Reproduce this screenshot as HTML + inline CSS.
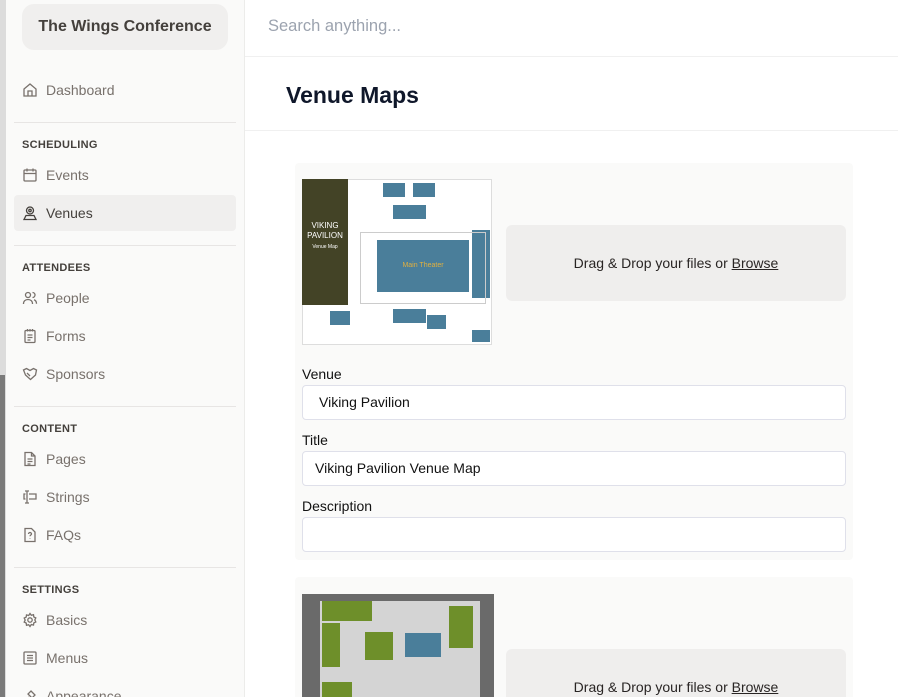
<!DOCTYPE html>
<html><head><style>
*{box-sizing:border-box;margin:0;padding:0}
html,body{width:898px;height:697px;overflow:hidden}
body{font-family:"Liberation Sans",sans-serif;background:#fff;position:relative}
.strip{position:absolute;left:0;top:0;width:6px;height:697px;background:#dcdcdc}
.strip2{position:absolute;left:0;top:375px;width:5px;height:322px;background:#7a7a7a}
.side{position:absolute;left:6px;top:0;width:239px;height:697px;background:#fafaf9;border-right:1px solid #ececea}
.brand{position:absolute;left:16px;top:4px;width:206px;height:46px;background:#f0efee;border-radius:12px;font-size:16px;font-weight:bold;color:#44403c;text-align:center;line-height:46px}
.item{position:absolute;left:8px;width:222px;height:36px;border-radius:4px;font-size:14px;color:#78716c;line-height:36px;padding-left:32px}
.item svg{position:absolute;left:8px;top:10px}
.item.act{background:#f0efee;color:#44403c}
.sec{position:absolute;left:16px;font-size:11px;font-weight:bold;color:#44403c;letter-spacing:.3px}
.hr{position:absolute;left:8px;width:222px;height:1px;background:#e7e5e4}
.search{position:absolute;left:268px;top:17px;font-size:16.5px;color:#9ca3af}
.l1{position:absolute;left:245px;top:56px;width:653px;height:1px;background:#f0f0f0}
.l2{position:absolute;left:245px;top:130px;width:653px;height:1px;background:#f0f0f0}
h1{position:absolute;left:286px;top:82px;font-size:23px;color:#0f172a}
.card{position:absolute;left:295px;width:558px;background:#fafaf9;border-radius:4px}
.drop{position:absolute;left:506px;width:340px;height:76px;background:#efeeed;border-radius:6px;font-size:14px;color:#292524;text-align:center;line-height:76px}
.drop u{text-decoration:underline}
.lbl{position:absolute;left:302px;font-size:14px;color:#111}
.inp{position:absolute;left:302px;width:544px;height:35px;background:#fff;border:1px solid #dfe0ea;border-radius:4px;font-size:14px;color:#111;line-height:33px;padding-left:12px}
.m{position:absolute}
</style></head><body>
<div class="strip"></div><div class="strip2"></div>
<div class="side">
<div class="brand">The Wings Conference</div>
</div>
<div class="item" style="top:72px;left:14px"><svg width="16" height="16" viewBox="0 0 16 16" fill="none" stroke="#78716c" stroke-width="1.3"><path d="M2 7L8 2l6 5v7H2z M6 14V9h4v5"/></svg>Dashboard</div>
<div class="hr" style="top:122px;left:14px"></div>
<div class="sec" style="top:139px;left:22px">SCHEDULING</div>
<div class="item" style="top:157px;left:14px"><svg width="16" height="16" viewBox="0 0 16 16" fill="none" stroke="#78716c" stroke-width="1.3"><rect x="2" y="3" width="12" height="11" rx="1"/><path d="M2 6.5h12M5 1.5v3M11 1.5v3"/></svg>Events</div>
<div class="item act" style="top:195px;left:14px"><svg width="16" height="16" viewBox="0 0 16 16" fill="none" stroke="#44403c" stroke-width="1.3"><circle cx="8" cy="5.5" r="3.5"/><circle cx="8" cy="5.5" r="1.2"/><path d="M2 14.5l2-4h8l2 4z"/></svg>Venues</div>
<div class="hr" style="top:245px;left:14px"></div>
<div class="sec" style="top:262px;left:22px">ATTENDEES</div>
<div class="item" style="top:280px;left:14px"><svg width="16" height="16" viewBox="0 0 16 16" fill="none" stroke="#78716c" stroke-width="1.3"><circle cx="6" cy="5" r="2.5"/><path d="M1.5 14c0-3 2-4.5 4.5-4.5s4.5 1.5 4.5 4.5M10.5 2.5a2.5 2.5 0 010 5M12 9.8c1.5.5 2.5 2 2.5 4"/></svg>People</div>
<div class="item" style="top:318px;left:14px"><svg width="16" height="16" viewBox="0 0 16 16" fill="none" stroke="#78716c" stroke-width="1.3"><rect x="3" y="2.5" width="10" height="12" rx="1"/><path d="M5.5 1v2.5M8 1v2.5M10.5 1v2.5M5.5 7h5M5.5 9.5h5M5.5 12h3"/></svg>Forms</div>
<div class="item" style="top:356px;left:14px"><svg width="16" height="16" viewBox="0 0 16 16" fill="none" stroke="#78716c" stroke-width="1.3"><path d="M1.5 4l3-1.5 3.5 2 3.5-2 3 1.5-1 5-5 4.5-5-4.5z M5 7l3 3"/></svg>Sponsors</div>
<div class="hr" style="top:406px;left:14px"></div>
<div class="sec" style="top:423px;left:22px">CONTENT</div>
<div class="item" style="top:441px;left:14px"><svg width="16" height="16" viewBox="0 0 16 16" fill="none" stroke="#78716c" stroke-width="1.3"><path d="M3 1.5h6.5L13 5v9.5H3z M9.5 1.5V5H13M5.5 8h5M5.5 10.5h5M5.5 13h3"/></svg>Pages</div>
<div class="item" style="top:479px;left:14px"><svg width="16" height="16" viewBox="0 0 16 16" fill="none" stroke="#78716c" stroke-width="1.3"><path d="M5 2v12M3 2h4M3 14h4M7 5h7v5H7M3.5 5H2v5h1.5"/></svg>Strings</div>
<div class="item" style="top:517px;left:14px"><svg width="16" height="16" viewBox="0 0 16 16" fill="none" stroke="#78716c" stroke-width="1.3"><path d="M3 1.5h6.5L13 5v9.5H3z M6.5 7a1.5 1.5 0 113 0c0 1-1.5 1-1.5 2.2M8 11.5v.5"/></svg>FAQs</div>
<div class="hr" style="top:567px;left:14px"></div>
<div class="sec" style="top:584px;left:22px">SETTINGS</div>
<div class="item" style="top:602px;left:14px"><svg width="16" height="16" viewBox="0 0 16 16" fill="none" stroke="#78716c" stroke-width="1.3"><circle cx="8" cy="8" r="2.2"/><path d="M8 1.5l1.3 1.8 2.2-.6.3 2.2 2 1-1 2 1 2-2 1-.3 2.2-2.2-.6L8 14.5l-1.3-1.8-2.2.6-.3-2.2-2-1 1-2-1-2 2-1 .3-2.2 2.2.6z"/></svg>Basics</div>
<div class="item" style="top:640px;left:14px"><svg width="16" height="16" viewBox="0 0 16 16" fill="none" stroke="#78716c" stroke-width="1.3"><rect x="2" y="2" width="12" height="12" rx="1"/><path d="M5 5.5h6M5 8h6M5 10.5h6"/></svg>Menus</div>
<div class="item" style="top:678px;left:14px"><svg width="16" height="16" viewBox="0 0 16 16" fill="none" stroke="#78716c" stroke-width="1.3"><path d="M2 14l5-5M6 6l4 4M9 3l4 4-3 3-4-4z"/></svg>Appearance</div>

<div class="search">Search anything...</div>
<div class="l1"></div>
<h1>Venue Maps</h1>
<div class="l2"></div>

<div class="card" style="top:163px;height:397px"></div>
<div class="m" style="left:302px;top:179px;width:190px;height:166px;background:#fff;border:1px solid #ddd"></div>
<div class="m" style="left:302px;top:179px;width:46px;height:126px;background:#434326;color:#fff;font-size:8px;text-align:center;padding-top:42px;line-height:10px">VIKING<br>PAVILION<br><span style="font-size:5px">Venue Map</span></div>
<div class="m" style="left:377px;top:240px;width:92px;height:52px;background:#4a7e9a;color:#e0b040;font-size:7px;text-align:center;line-height:52px">Main Theater</div>
<div class="m" style="left:472px;top:230px;width:18px;height:68px;background:#4a7e9a"></div>
<div class="m" style="left:393px;top:205px;width:33px;height:14px;background:#4a7e9a"></div>
<div class="m" style="left:393px;top:309px;width:33px;height:14px;background:#4a7e9a"></div>
<div class="m" style="left:383px;top:183px;width:22px;height:14px;background:#4a7e9a"></div>
<div class="m" style="left:413px;top:183px;width:22px;height:14px;background:#4a7e9a"></div>
<div class="m" style="left:427px;top:315px;width:19px;height:14px;background:#4a7e9a"></div>
<div class="m" style="left:330px;top:311px;width:20px;height:14px;background:#4a7e9a"></div>
<div class="m" style="left:472px;top:330px;width:18px;height:12px;background:#4a7e9a"></div>
<div class="m" style="left:360px;top:232px;width:126px;height:72px;border:1px solid #ccc"></div>
<div class="drop" style="top:225px">Drag &amp; Drop your files or <u>Browse</u></div>
<div class="lbl" style="top:366px">Venue</div>
<div class="inp" style="top:385px;padding-left:16px">Viking Pavilion</div>
<div class="lbl" style="top:432px">Title</div>
<div class="inp" style="top:451px">Viking Pavilion Venue Map</div>
<div class="lbl" style="top:498px">Description</div>
<div class="inp" style="top:517px"></div>

<div class="card" style="top:577px;height:130px"></div>
<div class="m" style="left:302px;top:594px;width:192px;height:103px;background:#6a6a6a"></div>
<div class="m" style="left:320px;top:601px;width:160px;height:96px;background:#d4d4d4"></div>
<div class="m" style="left:322px;top:601px;width:50px;height:20px;background:#6e8f2a"></div>
<div class="m" style="left:322px;top:623px;width:18px;height:44px;background:#6e8f2a"></div>
<div class="m" style="left:365px;top:632px;width:28px;height:28px;background:#6e8f2a"></div>
<div class="m" style="left:405px;top:633px;width:36px;height:24px;background:#4a7e9a"></div>
<div class="m" style="left:449px;top:606px;width:24px;height:42px;background:#6e8f2a"></div>
<div class="m" style="left:322px;top:682px;width:30px;height:15px;background:#6e8f2a"></div>
<div class="drop" style="top:649px">Drag &amp; Drop your files or <u>Browse</u></div>
</body></html>
